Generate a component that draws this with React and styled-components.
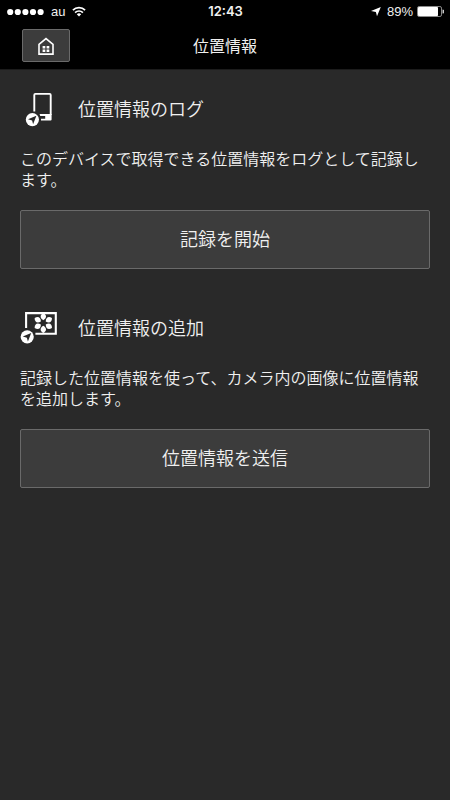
import styled, { createGlobalStyle } from "styled-components";

const GlobalStyle = createGlobalStyle`
  * {
    box-sizing: border-box;
  }

  body {
    margin: 0;
    min-height: 100vh;
    background-color: #292929;
    color: #f0f0f0;
    font-family: "Noto Sans CJK JP", sans-serif;
    font-weight: 350;
  }
`;

const Header = styled.header`
  background-color: #000;
  border-bottom: 1px solid #1c1c1c;
`;

const StatusBar = styled.div`
  height: 23px;
  padding: 0 6px 0 7px;
  display: grid;
  grid-template-columns: 1fr auto 1fr;
  align-items: center;
  font-family: "Liberation Sans", sans-serif;
  font-size: 13px;
  font-weight: 400;
  line-height: 23px;
`;

const StatusGroup = styled.div`
  display: flex;
  align-items: center;
  justify-content: ${({ $end }) => ($end ? "flex-end" : "flex-start")};
  gap: ${({ $end }) => ($end ? "4px" : "7px")};
`;

const Clock = styled.time`
  font-family: Inter, sans-serif;
  font-weight: 600;
`;

const NavBar = styled.div`
  height: 46px;
  padding: 0 22px 1px;
  display: grid;
  grid-template-columns: 1fr auto 1fr;
  align-items: center;
`;

const PageTitle = styled.h1`
  margin: 0;
  padding-bottom: 2px;
  font-size: 16px;
  font-weight: 400;
  line-height: 24px;
`;

const Button = styled.button`
  display: flex;
  align-items: center;
  justify-content: center;
  padding: 0;
  background-color: #3c3c3c;
  border: 1px solid #6a6a6a;
  border-radius: 2px;
  color: inherit;
  font: inherit;
`;

const HomeButton = styled(Button)`
  width: 48px;
  height: 33px;
`;

const ActionButton = styled(Button)`
  width: 100%;
  height: 59px;
  padding-bottom: 3px;
  font-size: 18px;
`;

const Main = styled.main`
  padding: 19px 20px;
  display: flex;
  flex-direction: column;
  gap: 39px;
`;

const Heading = styled.div`
  height: 40px;
  display: flex;
  align-items: center;
  gap: 18px;
`;

const SectionTitle = styled.h2`
  margin: 0;
  padding-bottom: 2px;
  font-size: 18px;
  font-weight: inherit;
  line-height: 24px;
`;

const Description = styled.p`
  margin: 19px 0 20px;
  font-size: 16px;
  line-height: 21px;
`;

const SignalDots = () => (
  <svg width="37" height="8" viewBox="0 0 37 8" fill="#fff" aria-hidden="true">
    {[3.2, 10.8, 18.4, 26, 33.6].map((cx) => (
      <circle key={cx} cx={cx} cy="4" r="3.1" />
    ))}
  </svg>
);

const WifiIcon = () => (
  <svg width="14" height="12" viewBox="0 0 14 12" aria-hidden="true">
    <g fill="none" stroke="#fff" strokeWidth="1.7">
      <path d="M.9 4.2a8.6 8.6 0 0 1 12.2 0" />
      <path d="M3.1 6.6a5.5 5.5 0 0 1 7.8 0" />
    </g>
    <path d="M4.8 8.3a3.1 3.1 0 0 1 4.4 0L7 10.6z" fill="#fff" />
  </svg>
);

const LocationArrow = () => (
  <svg width="12" height="10" viewBox="0 0 12 10" aria-hidden="true">
    <path d="M9.8 0L6 9.2L4.9 4.9L0 4z" fill="#fff" />
  </svg>
);

const BatteryIcon = () => (
  <svg width="27" height="12" viewBox="0 0 27 12" aria-hidden="true">
    <rect x=".5" y=".5" width="24" height="10" rx="1.6" fill="none" stroke="#8c8c8c" />
    <rect x="1" y="1" width="20" height="9" rx=".8" fill="#fff" />
    <path d="M25.5 3.5a2 2 0 0 1 0 4z" fill="#ccc" />
  </svg>
);

const HomeIcon = () => (
  <svg width="18" height="20" viewBox="0 0 18 20" aria-hidden="true">
    <path d="M2 18.1V8.4L9 2.6l7 5.8v9.7z" fill="none" stroke="#fff" strokeWidth="1.6" />
    <path d="M5.6 10h2.7v2.4H5.6zM9.6 10h2.7v2.4H9.6zM5.6 13.5h2.7v2.4H5.6zM9.6 13.5h2.7v2.4H9.6z" fill="#fff" />
  </svg>
);

const GpsBadge = ({ x, y }) => (
  <g transform={`translate(${x} ${y})`}>
    <circle r="6.6" fill="#fff" />
    <path d="M4-3.8L.7 4.6L-.3.9L-4.4-.4z" fill="#292929" />
  </g>
);

const PhoneIcon = () => (
  <svg width="40" height="40" viewBox="0 0 40 40" aria-hidden="true">
    <path d="M14.3 22.6V6q0-1.1 1.1-1.1h14.2q1.1 0 1.1 1.1v20" fill="none" stroke="#fff" strokeWidth="1.9" />
    <path d="M19.6 25h12v5.6q0 1-1 1h-9.6v-1.8h4.2v-2.8h-5z" fill="#fff" />
    <GpsBadge x={12.4} y={30.6} />
  </svg>
);

const PictureIcon = () => (
  <svg width="40" height="40" viewBox="0 0 40 40" aria-hidden="true">
    <path d="M6.1 20V5.1h29.7v20.7H15.4" fill="none" stroke="#fff" strokeWidth="2.1" />
    <g fill="#fff">
      {[0, 60, 120, 180, 240, 300].map((angle) => (
        <path
          key={angle}
          d="M0-2.8C-3.6-5-3.6-8 0-10C3.6-8 3.6-5 0-2.8z"
          transform={`translate(23.3 15) rotate(${angle})`}
        />
      ))}
    </g>
    <GpsBadge x={7.2} y={28.8} />
  </svg>
);

const Section = ({ icon, title, description, action }) => (
  <section>
    <Heading>
      {icon}
      <SectionTitle>{title}</SectionTitle>
    </Heading>
    <Description>{description}</Description>
    <ActionButton type="button">{action}</ActionButton>
  </section>
);

const App = () => {
  return (
    <>
      <GlobalStyle />
      <Header>
        <StatusBar>
          <StatusGroup>
            <SignalDots />
            <span>au</span>
            <WifiIcon />
          </StatusGroup>
          <Clock>12:43</Clock>
          <StatusGroup $end>
            <LocationArrow />
            <span>89%</span>
            <BatteryIcon />
          </StatusGroup>
        </StatusBar>
        <NavBar>
          <HomeButton type="button" aria-label="ホーム">
            <HomeIcon />
          </HomeButton>
          <PageTitle>位置情報</PageTitle>
        </NavBar>
      </Header>
      <Main>
        <Section
          icon={<PhoneIcon />}
          title="位置情報のログ"
          description="このデバイスで取得できる位置情報をログとして記録します。"
          action="記録を開始"
        />
        <Section
          icon={<PictureIcon />}
          title="位置情報の追加"
          description="記録した位置情報を使って、カメラ内の画像に位置情報を追加します。"
          action="位置情報を送信"
        />
      </Main>
    </>
  );
};

export default App;
